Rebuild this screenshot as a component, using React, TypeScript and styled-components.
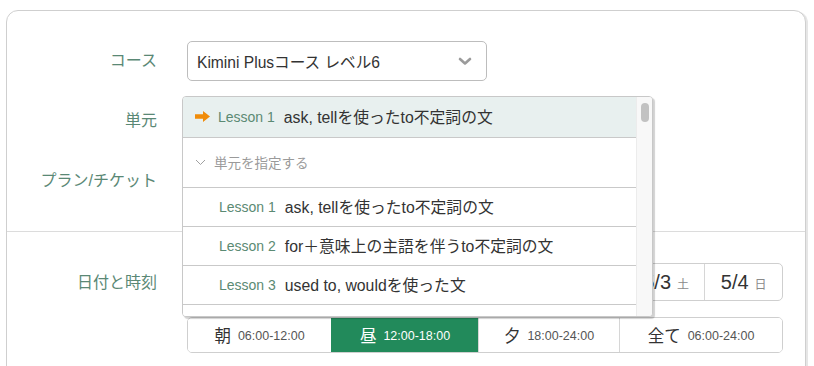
import React from 'react';
import styled, { createGlobalStyle } from 'styled-components';

const GlobalStyle = createGlobalStyle`
  body {
    margin: 0;
    background: #fff;
    font-family: "Liberation Sans", "Noto Sans CJK JP", sans-serif;
    color: #333;
  }
`;

const Page = styled.div`
  padding: 10px 8px 0 6px;
`;

const Card = styled.div`
  border: 1px solid #cfcfcf;
  border-radius: 12px;
  box-shadow: 2px 1px 0 #e6e6e6;
  background: #fff;
`;

const Section = styled.div<{ $top: number; $divided?: boolean }>`
  display: grid;
  grid-template-columns: 150px 1fr;
  column-gap: 30px;
  row-gap: 20px;
  align-items: center;
  padding: ${p => p.$top}px 22px 30px 0;
  border-top: ${p => (p.$divided ? '1px solid #dcdcdc' : 'none')};
`;

const Label = styled.div<{ $alignTop?: boolean }>`
  text-align: right;
  font-size: 16px;
  color: #5a8875;
  align-self: ${p => (p.$alignTop ? 'start' : 'center')};
  line-height: ${p => (p.$alignTop ? '38px' : '20px')};
  margin-top: ${p => (p.$alignTop ? '1px' : '-1px')};
`;

const Field = styled.div`
  position: relative;
`;

const Select = styled.div`
  width: 300px;
  height: 40px;
  box-sizing: border-box;
  border: 1px solid #bdbdbd;
  border-radius: 5px;
  display: flex;
  align-items: center;
  justify-content: space-between;
  padding: 0 14px 0 9px;
  font-size: 15.6px;
  color: #333;
  background: #fff;
`;

const Dropdown = styled.div`
  position: absolute;
  top: -5px;
  left: -5px;
  width: 471px;
  height: 221px;
  box-sizing: border-box;
  border: 1px solid #c8c8c8;
  border-radius: 4px;
  background: #fff;
  box-shadow: 2px 2px 1px rgba(0, 0, 0, 0.18);
  display: flex;
  overflow: hidden;
  z-index: 10;
`;

const List = styled.div`
  flex: 1;
  overflow: hidden;
`;

const Option = styled.div<{ $h: number; $selected?: boolean }>`
  height: ${p => p.$h}px;
  box-sizing: content-box;
  border-bottom: 1px solid #c9c9c9;
  background: ${p => (p.$selected ? '#e8f0ef' : '#fff')};
  display: flex;
  align-items: center;
  padding-left: ${p => (p.$selected ? '12px' : '36px')};
  & > * {
    margin-top: -1px;
  }
`;

const Placeholder = styled.div`
  display: flex;
  align-items: center;
  gap: 8px;
  padding-left: 12px;
  font-size: 13.5px;
  color: #9a9a9a;
`;

const LessonNo = styled.span`
  font-size: 14px;
  color: #5b8a73;
  margin-right: 9px;
  white-space: nowrap;
`;

const LessonTitle = styled.span`
  font-size: 15.8px;
  color: #333;
  white-space: nowrap;
`;

const Arrow = styled.svg`
  margin-right: 8px;
  flex-shrink: 0;
`;

const ScrollTrack = styled.div`
  width: 15px;
  background: #f8f8f8;
  border-left: 1px solid #ececec;
  padding-top: 6px;
  display: flex;
  justify-content: center;
`;

const ScrollThumb = styled.div`
  width: 8px;
  height: 19px;
  border-radius: 4px;
  background: #c2c2c2;
`;

const Stack = styled.div`
  display: flex;
  flex-direction: column;
  gap: 16px;
`;

const DateRow = styled.div`
  display: grid;
  grid-template-columns: 51px repeat(7, 1fr);
  height: 38px;
  border: 1px solid #cfcfcf;
  border-radius: 5px;
  box-sizing: border-box;
  overflow: hidden;
`;

const DateCell = styled.div`
  display: flex;
  align-items: center;
  justify-content: center;
  gap: 6px;
  border-left: 1px solid #d6d6d6;
  &:first-child {
    border-left: none;
  }
`;

const DateNum = styled.span`
  font-size: 20px;
  color: #333;
`;

const DayName = styled.span`
  font-size: 12px;
  color: #8a8a8a;
  padding-top: 3px;
`;

const TimeRow = styled.div`
  display: grid;
  grid-template-columns: 143px 147px 141px 1fr;
  height: 36px;
  border: 1px solid #cfcfcf;
  border-radius: 5px;
  box-sizing: border-box;
  overflow: hidden;
`;

const TimeCell = styled.div<{ $active?: boolean }>`
  display: flex;
  align-items: center;
  justify-content: center;
  gap: 7px;
  background: ${p => (p.$active ? '#228a5b' : '#fff')};
  color: ${p => (p.$active ? '#fff' : '#333')};
  border-left: 1px solid ${p => (p.$active ? '#228a5b' : '#d6d6d6')};
  &:first-child {
    border-left: none;
  }
`;

const TimeName = styled.span`
  font-size: 16.5px;
`;

const TimeRange = styled.span<{ $active?: boolean }>`
  font-size: 12.5px;
  color: ${p => (p.$active ? '#fff' : '#555')};
  padding-top: 2px;
`;

const lessons = [
  { no: 'Lesson 1', title: 'ask, tellを使ったto不定詞の文' },
  { no: 'Lesson 2', title: 'for＋意味上の主語を伴うto不定詞の文' },
  { no: 'Lesson 3', title: 'used to, wouldを使った文' },
  { no: 'Lesson 4', title: 'whatを使った文' },
];

const dates = [
  ['4/28', '日'],
  ['4/29', '月'],
  ['4/30', '火'],
  ['5/1', '水'],
  ['5/2', '木'],
  ['5/3', '土'],
  ['5/4', '日'],
];

const times = [
  { name: '朝', range: '06:00-12:00' },
  { name: '昼', range: '12:00-18:00', active: true },
  { name: '夕', range: '18:00-24:00' },
  { name: '全て', range: '06:00-24:00' },
];

function ChevronDown() {
  return (
    <svg width="14" height="9" viewBox="0 0 14 9">
      <polyline points="2,2 7,6.5 12,2" fill="none" stroke="#9b9b9b" strokeWidth="2.6" strokeLinecap="round" strokeLinejoin="round" />
    </svg>
  );
}

function ThinChevron() {
  return (
    <svg width="11" height="7" viewBox="0 0 11 7">
      <polyline points="1,1 5.5,5.5 10,1" fill="none" stroke="#a0a0a0" strokeWidth="1" />
    </svg>
  );
}

export default function App() {
  return (
    <Page>
      <GlobalStyle />
      <Card>
        <Section $top={30}>
          <Label>コース</Label>
          <Field>
            <Select>
              <span>Kimini Plusコース レベル6</span>
              <ChevronDown />
            </Select>
          </Field>

          <Label>単元</Label>
          <Field>
            <Select>
              <span>Lesson 1 ask, tellを使ったto不定詞の文</span>
              <ChevronDown />
            </Select>
            <Dropdown>
              <List>
                <Option $h={40} $selected>
                  <Arrow width="15" height="11" viewBox="0 0 15 11">
                    <path d="M0 3.3H8V0L15 5.5L8 11V7.7H0Z" fill="#f08c0a" />
                  </Arrow>
                  <LessonNo>Lesson 1</LessonNo>
                  <LessonTitle>ask, tellを使ったto不定詞の文</LessonTitle>
                </Option>
                <Option $h={49} $selected={false} style={{ paddingLeft: 0 }}>
                  <Placeholder>
                    <ThinChevron />
                    単元を指定する
                  </Placeholder>
                </Option>
                {lessons.map(l => (
                  <Option key={l.no} $h={38}>
                    <LessonNo>{l.no}</LessonNo>
                    <LessonTitle>{l.title}</LessonTitle>
                  </Option>
                ))}
              </List>
              <ScrollTrack>
                <ScrollThumb />
              </ScrollTrack>
            </Dropdown>
          </Field>

          <Label>プラン/チケット</Label>
          <Field>
            <Select>
              <span>チケット</span>
              <ChevronDown />
            </Select>
          </Field>
        </Section>

        <Section $top={31} $divided>
          <Label $alignTop>日付と時刻</Label>
          <Stack>
            <DateRow>
              <DateCell>
                <DayName>‹</DayName>
              </DateCell>
              {dates.map(([d, w]) => (
                <DateCell key={d}>
                  <DateNum>{d}</DateNum>
                  <DayName>{w}</DayName>
                </DateCell>
              ))}
            </DateRow>
            <TimeRow>
              {times.map(t => (
                <TimeCell key={t.name} $active={t.active}>
                  <TimeName>{t.name}</TimeName>
                  <TimeRange $active={t.active}>{t.range}</TimeRange>
                </TimeCell>
              ))}
            </TimeRow>
          </Stack>
        </Section>
      </Card>
    </Page>
  );
}
